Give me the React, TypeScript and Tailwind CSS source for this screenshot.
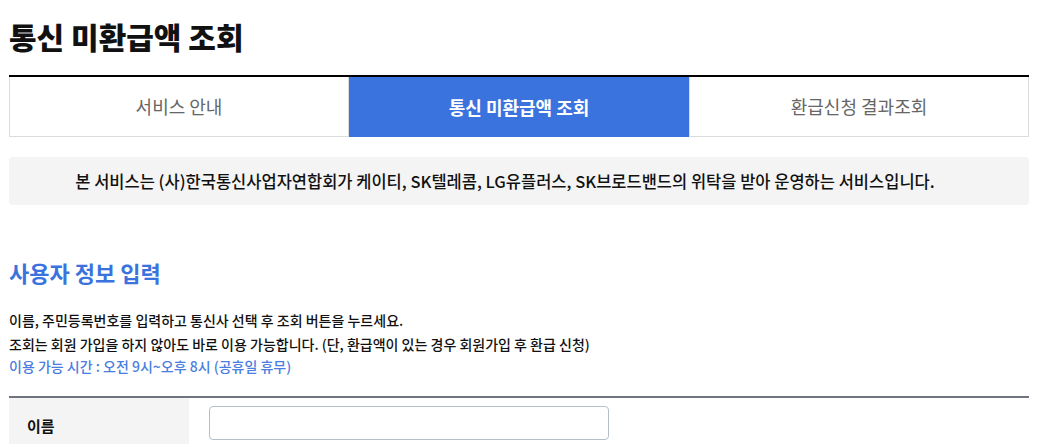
import React from 'react';

const tabs = ['서비스 안내', '통신 미환급액 조회', '환급신청 결과조회'];

export default function App() {
    const active = 1;

    return (
        <div className="w-[1038px] bg-white px-[9px] pt-[14px] text-[#111]" style={{ fontFamily: '"Noto Sans CJK KR", "Noto Sans", sans-serif' }}>
            <h1 className="text-[30px] font-black leading-[44px]">통신 미환급액 조회</h1>

            {/* tab bar */}
            <div className="mt-[17px] grid grid-cols-3 border-t-2 border-black">
                {tabs.map((t, i) => (
                    <div
                        key={t}
                        className={
                            i === active
                                ? 'flex h-[60px] items-center justify-center bg-[#3a73de] text-[18px] font-bold text-white'
                                : 'flex h-[60px] items-center justify-center border border-t-0 border-[#dcdcdc] text-[18px] text-[#666]'
                        }
                    >
                        {t}
                    </div>
                ))}
            </div>

            <div className="mt-[20px] flex h-[48px] items-center justify-center rounded-[4px] bg-[#f4f4f4] pr-[28px] text-[16.5px] font-medium text-[#111]">
                본 서비스는 (사)한국통신사업자연합회가 케이티, SK텔레콤, LG유플러스, SK브로드밴드의 위탁을 받아 운영하는 서비스입니다.
            </div>

            <h2 className="mt-[52px] text-[22px] font-bold leading-[30px] text-[#3a73de]">사용자 정보 입력</h2>

            <div className="mt-[21px] text-[14px] font-medium">
                <p className="leading-[25px] text-[#111]">이름, 주민등록번호를 입력하고 통신사 선택 후 조회 버튼을 누르세요.</p>
                <p className="leading-[23px] text-[#111]">조회는 회원 가입을 하지 않아도 바로 이용 가능합니다. (단, 환급액이 있는 경우 회원가입 후 환급 신청)</p>
                <p className="leading-[20px] text-[#4a7de0]">이용 가능 시간 : 오전 9시~오후 8시 (공휴일 휴무)</p>
            </div>

            <div className="mt-[20px] border-t-2 border-[#6f757c]">
                <div className="flex">
                    <div className="flex h-[56px] w-[180px] items-center bg-[#f4f4f4] pl-[18px] text-[15px] font-bold">이름</div>
                    <div className="flex flex-1 items-start pt-[8px] pl-[20px]">
                        <input className="h-[34px] w-[400px] rounded-[4px] border border-[#b6bfc9] bg-white px-2 outline-none" />
                    </div>
                </div>
            </div>
        </div>
    );
}
